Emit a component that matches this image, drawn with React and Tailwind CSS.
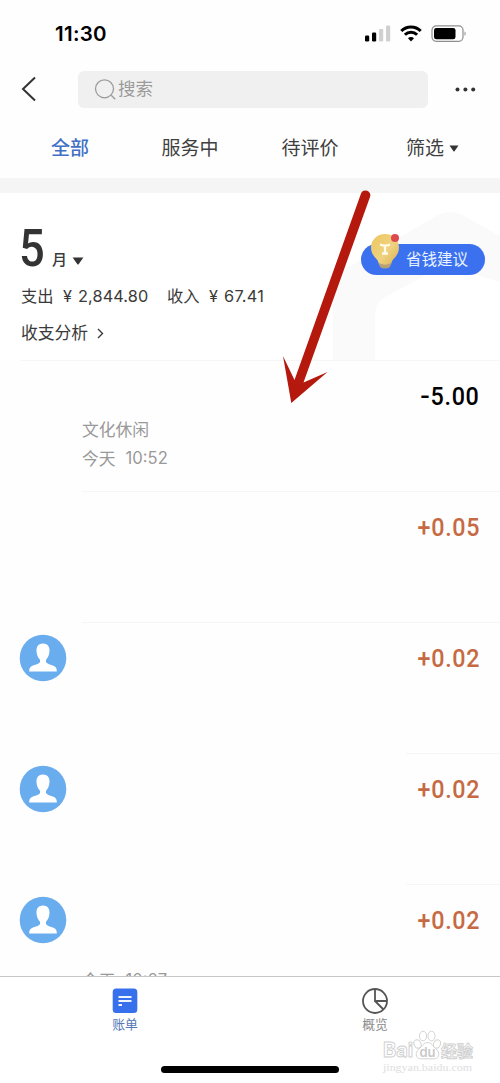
import clsx from 'clsx'

const sans = "font-[Inter,'Noto_Sans_CJK_SC',sans-serif]"

const tabs = ['全部', '服务中', '待评价']

const bills = [
  { id: 1, sign: '-', amount: '5.00', category: '文化休闲', time: '10:52' },
  { id: 2, sign: '+', amount: '0.05' },
  { id: 3, sign: '+', amount: '0.02', avatar: true },
  { id: 4, sign: '+', amount: '0.02', avatar: true, shortRule: true },
  { id: 5, sign: '+', amount: '0.02', avatar: true, shortRule: true, time: '10:07' },
]

const Caret = ({ className }) => (
  <svg viewBox="0 0 12 8" className={className} fill="currentColor">
    <path d="M0.6 0.5h10.8L6.6 7.3q-.6.6-1.2 0z" />
  </svg>
)

const StatusBar = () => (
  <div className="flex h-[66px] shrink-0 items-center justify-between pl-[55px] pr-[33px] text-black">
    <span className="pt-[2px] text-[20.5px] font-semibold leading-none tracking-[0.3px]">11:30</span>
    <div className="flex items-center gap-[9px]">
      <svg viewBox="0 0 26 17" className="h-[17px] w-[26px]">
        <rect x="0" y="10.5" width="4.2" height="6" rx="1.2" />
        <rect x="7" y="7.5" width="4.2" height="9" rx="1.2" />
        <rect x="14" y="4" width="4.2" height="12.5" rx="1.2" fill="#d0d0d0" />
        <rect x="21" y="0.5" width="4.2" height="16" rx="1.2" fill="#d0d0d0" />
      </svg>
      <svg viewBox="0 0 22 17" className="h-[17px] w-[22px]" fill="none" stroke="#000" strokeWidth="3">
        <path d="M1.3 6a13.7 13.7 0 0 1 19.4 0" />
        <path d="M4.9 9.8a8.6 8.6 0 0 1 12.2 0" />
        <path d="M11 16.4l-3-3.2a4.2 4.2 0 0 1 6 0z" fill="#000" stroke="none" />
      </svg>
      <svg viewBox="0 0 36 17" className="h-[17px] w-[36px]">
        <rect x="1" y="0.9" width="31" height="15.4" rx="4.2" fill="none" stroke="#8f8f8f" strokeWidth="1.2" />
        <rect x="3" y="2.9" width="21.5" height="11.4" rx="2.4" />
        <path d="M33.6 6.3q2 2.3 0 4.6z" fill="#777" />
      </svg>
    </div>
  </div>
)

const SearchHeader = () => (
  <div className="flex h-[46px] shrink-0 items-center pl-5 pr-6">
    <svg viewBox="0 0 16 26" className="h-[26px] w-4" fill="none" stroke="#333" strokeWidth="2">
      <path d="M15 1.5L3 13l12 11.5" />
    </svg>
    <div className="ml-[42px] flex h-[37px] w-[350px] items-center rounded-md bg-[#f0f0f0] pl-4 text-[#9b9b9b]">
      <svg viewBox="0 0 23 23" className="h-[23px] w-[23px]" fill="none" stroke="currentColor" strokeWidth="1.3">
        <circle cx="10.5" cy="10.8" r="9" />
        <path d="M17.2 17.2l4 4" />
      </svg>
      <span className="ml-px text-[17.5px] leading-none">搜索</span>
    </div>
    <svg viewBox="0 0 21 5" className="ml-[27px] h-[5px] w-[21px]" fill="#333">
      <circle cx="2.5" cy="2.5" r="2" />
      <circle cx="10.4" cy="2.5" r="2" />
      <circle cx="18.2" cy="2.5" r="2" />
    </svg>
  </div>
)

const Tabs = () => (
  <div className="grid h-[66px] shrink-0 grid-cols-4 items-center px-[10px] pt-[7px] text-center text-[19px] leading-none text-[#404040]">
    {tabs.map((tab, i) => (
      <span key={tab} className={clsx(i === 0 && 'font-medium text-[#4170c4]')}>{tab}</span>
    ))}
    <span className="flex items-center justify-center gap-[5px] pl-[5px]">
      筛选
      <Caret className="h-[7px] w-[10px] text-[#333]" />
    </span>
  </div>
)

const SavingsButton = () => (
  <button className="relative flex h-[31px] w-[124px] items-center rounded-full bg-[#3b71ef] pl-[45px] pt-px text-[15.5px] leading-none text-[#eaf4ff]">
    省钱建议
    <svg viewBox="0 0 30 38" className="absolute -top-[11px] left-[9px] h-[38px] w-[30px]">
      <defs>
        <linearGradient id="bulb" x1="0" y1="0" x2="1" y2="1">
          <stop offset="0" stopColor="#edc75e" />
          <stop offset="0.55" stopColor="#efd281" />
          <stop offset="1" stopColor="#d9ae4e" />
        </linearGradient>
      </defs>
      <path d="M15 1C7 1 1 7 1 14.500c0 5 2.500 8.500 5.500 11.500 1.500 1.800 2 3.500 2.500 5.500q6 4.500 12 0c.5-2 1-3.700 2.500-5.500 3-3 5.500-6.500 5.500-11.500C29 7 23 1 15 1z" fill="url(#bulb)" />
      <path d="M9 30q6 3.500 12 0l-1 4q-5 3-10 0z" fill="#b5a078" />
      <path d="M10 11.500q5 2.400 10 0M15 13v7.500M12 20.500h6" fill="none" stroke="#fffbe9" strokeWidth="2.300" />
      <circle cx="25" cy="5" r="4" fill="#dc4a50" />
    </svg>
  </button>
)

const Summary = () => (
  <section className="relative h-[167px] shrink-0 bg-white pl-[21px] text-[#3a3a3a]">
    <svg viewBox="333 211 167 149" className="absolute bottom-0 right-0 h-[149px] w-[167px]" fill="#fafafb">
      <path d="M333 360V286q0-10 9-15l96-56q12-6 24 0l38 21v46l-30-9q-20-6-40 0l-45 24q-10 6-10 18v45z" />
    </svg>
    <div className="relative flex h-[78px] items-end">
      <span className="-ml-[2px] w-[33px] origin-left scale-x-[0.87] font-[Roboto,sans-serif] text-[52px] font-medium leading-[44px] text-[#333]">5</span>
      <span className="text-[15px] font-medium leading-[23px]">月</span>
      <Caret className="mb-[6px] ml-[5px] h-2 w-3 text-[#333]" />
      <div className="absolute right-[15px] top-[51px]">
        <SavingsButton />
      </div>
    </div>
    <div className="relative mt-[13px] flex h-6 items-center text-[16.3px] leading-none">
      <span className="w-[42px]">支出</span>
      <span className="w-[15px]">¥</span>
      <span className="w-[89px] tracking-[0.1px]">2,844.80</span>
      <span className="w-[42px]">收入</span>
      <span className="w-[15px]">¥</span>
      <span className="tracking-[0.3px]">67.41</span>
    </div>
    <div className="relative mt-[13px] flex h-6 items-center text-[16.8px] leading-none">
      收支分析
      <svg viewBox="0 0 7 11" className="ml-[9px] h-[11px] w-[7px]" fill="none" stroke="currentColor" strokeWidth="1.4">
        <path d="M1 1l4.500 4.500L1 10" />
      </svg>
    </div>
  </section>
)

const Avatar = () => (
  <svg viewBox="0 0 48 48" className="h-12 w-12">
    <circle cx="24" cy="24" r="23.300" fill="#6aadee" />
    <path d="M24 9.500c-4.500 0-6.700 3-6.500 7.500.1 3.500 1.500 6.800 3.500 8.800v2.200c-1 2-4.500 2.500-7.500 3.700-2.800 1.200-3.300 2.800-3.300 5.800h27.600c0-3-.5-4.600-3.300-5.800-3-1.200-6.500-1.700-7.500-3.700v-2.200c2-2 3.400-5.300 3.500-8.800.2-4.500-2-7.500-6.500-7.500z" fill="#fff" />
  </svg>
)

const Amount = ({ sign, value }) => (
  <span
    className={clsx(
      'flex h-8 origin-right scale-x-[0.88] pt-[19px] font-[Roboto,sans-serif] text-[26.5px] font-medium leading-8 tracking-[0.8px]',
      sign === '+' ? 'text-[#c66a43]' : 'text-black'
    )}
  >
    <span className={clsx(sign === '-' && 'origin-right scale-x-[1.2]')}>{sign}</span>
    {value}
  </span>
)

const BillRow = ({ bill, first }) => (
  <li className="flex h-[131px] shrink-0 flex-col">
    <div
      className={clsx(
        'h-px shrink-0 bg-[#f6f6f6]',
        first ? 'ml-5' : bill.shortRule ? 'ml-[406px]' : 'ml-[82px]'
      )}
    />
    <div className="flex flex-1 pl-[19px] pr-5">
      <div className="w-[63px] pt-[11px]">{bill.avatar && <Avatar />}</div>
      <div className="flex flex-1 flex-col pt-[57px] text-[16.8px] leading-6 text-[#999]">
        <span className={bill.category ? 'h-[29px]' : 'h-[27px]'}>{bill.category}</span>
        {bill.time && (
          <span className="flex gap-[10px]">
            今天
            <span className="-mt-px text-[16.6px]">{bill.time}</span>
          </span>
        )}
      </div>
      <Amount sign={bill.sign} value={bill.amount} />
    </div>
  </li>
)

const Watermark = () => (
  <svg viewBox="0 0 96 46" className="absolute bottom-[9px] right-[22px] h-[46px] w-[96px]">
    <g fill="#fff" stroke="#cfcfcf" strokeWidth="0.9">
      <ellipse cx="35.5" cy="16" rx="3.5" ry="4.4" transform="rotate(-20 35.500 16)" />
      <ellipse cx="41" cy="8" rx="3.6" ry="4.8" />
      <ellipse cx="49.5" cy="8" rx="3.6" ry="4.8" />
      <ellipse cx="55" cy="16" rx="3.4" ry="4.4" transform="rotate(20 55 16)" />
      <path d="M45.500 14.500c-4 0-5.500 4-8.500 6.500-4 3-4 9.500 1.500 9.800h14c5.500-.3 5.500-6.800 1.500-9.800-3-2.500-4.500-6.500-8.500-6.500z" />
      <text x="1" y="28.5" fontSize="20" fontWeight="700" className="font-[Inter,sans-serif]">Bai</text>
      <text x="59" y="28.5" fontSize="16" fontWeight="700" className="font-['Noto_Sans_CJK_SC',sans-serif]">经验</text>
    </g>
    <text x="37.5" y="28.5" fontSize="13" fontWeight="600" fill="#c9c9c9" className="font-[Inter,sans-serif]">du</text>
    <text x="1" y="43" fontSize="10.5" fill="#dedede" textLength="89" lengthAdjust="spacingAndGlyphs" className="font-['Liberation_Serif',serif]">jingyan.baidu.com</text>
  </svg>
)

const BottomBar = () => (
  <nav className="relative flex h-[107px] shrink-0 border-t border-[#c6c6c6] bg-white text-[12.8px] leading-none">
    <div className="flex w-1/2 flex-col items-center pt-[11px] text-[#5478b8]">
      <svg viewBox="0 0 26 26" className="h-[26px] w-[26px]">
        <rect x="0.7" y="0.5" width="24.6" height="24.5" rx="3.5" fill="#3770ed" />
        <path d="M6.500 9H19.500M6.500 13H19.500M6.500 17H10" fill="none" stroke="#eef5ff" strokeWidth="2" />
      </svg>
      <span className="mt-[5px]">账单</span>
    </div>
    <div className="flex w-1/2 flex-col items-center pt-[10px] text-[#8b8b8b]">
      <svg viewBox="0 0 28 28" className="h-7 w-7" fill="none" stroke="#555" strokeWidth="1.8">
        <circle cx="14" cy="14" r="12" />
        <path d="M14 2v12h12M14 14l8.500 8.500" />
      </svg>
      <span className="mt-[4px]">概览</span>
    </div>
    <div className="absolute bottom-[10px] left-[161px] h-[7px] w-[178px] rounded-full bg-black" />
    <Watermark />
  </nav>
)

const App = () => (
  <main className={clsx('relative flex h-[1083px] w-[500px] flex-col overflow-hidden bg-[#fefefe]', sans)}>
    <StatusBar />
    <SearchHeader />
    <Tabs />
    <div className="h-[15px] shrink-0 bg-[#f5f5f5]" />
    <Summary />
    <ul className="flex min-h-0 flex-1 flex-col overflow-hidden">
      {bills.map((bill, i) => (
        <BillRow key={bill.id} bill={bill} first={i === 0} />
      ))}
    </ul>
    <BottomBar />
    {/* Arrow pointing into the bill list */}
    <svg viewBox="280 185 95 222" className="pointer-events-none absolute left-[280px] top-[185px] h-[222px] w-[95px]">
      <path d="M361 193.500A4.700 4.700 0 0 1 370 197L303.500 382.500 327.500 372 291.300 403 283 356 294.500 380z" fill="#b5190d" />
    </svg>
  </main>
)

export default App
